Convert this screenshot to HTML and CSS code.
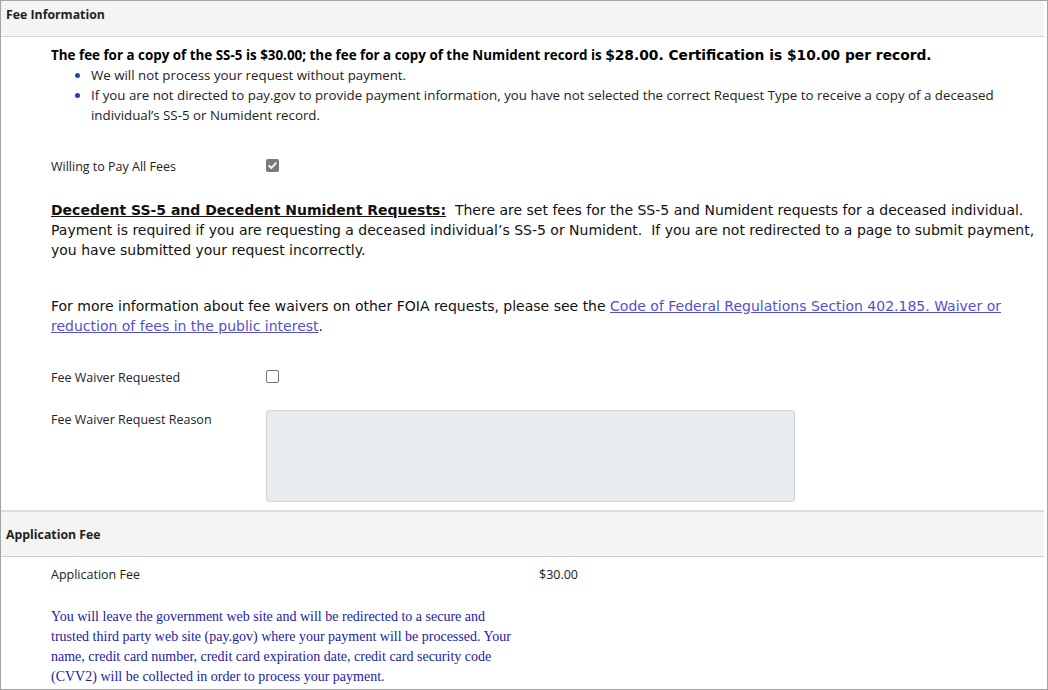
FILE: index.html
```html
<!DOCTYPE html>
<html lang="en">

<head>
  <meta charset="UTF-8">
  <meta name="viewport" content="width=device-width, initial-scale=1.0">
  <title>Fee Information</title>
  <link rel="stylesheet" href="styles.css">
</head>

<body>
  <div class="frame">
    <section class="panel">
      <div class="panel-head">Fee Information</div>
      <div class="panel-body fee-body">
        <p class="fee-lead">
          <span class="lead-ui">The fee for a copy of the SS-5 is $30.00; the fee for a copy of the Numident record is</span>
          <span class="lead-vd">$28.00. Certification is $10.00 per record.</span>
        </p>
        <ul class="fee-notes">
          <li>We will not process your request without payment.</li>
          <li>If you are not directed to pay.gov to provide payment information, you have not selected the correct Request Type to receive a copy of a deceased individual’s SS-5 or Numident record.</li>
        </ul>

        <div class="field-row row-pay">
          <span class="field-label">Willing to Pay All Fees</span>
          <span class="check is-checked">
            <svg width="13" height="13" viewBox="0 0 13 13">
              <rect x="0" y="0" width="13" height="13" rx="2" fill="#7a7a7a" />
              <path d="M3.2 6.8 L5.4 9 L9.9 4.2" fill="none" stroke="#fff" stroke-width="1.8" stroke-linecap="round" stroke-linejoin="round" />
            </svg>
          </span>
        </div>

        <p class="notice notice-decedent"><span class="notice-title">Decedent SS-5 and Decedent Numident Requests:</span>&nbsp; There are set fees for the SS-5 and Numident requests for a deceased individual. Payment is required if you are requesting a deceased individual’s SS-5 or Numident.&nbsp; If you are not redirected to a page to submit payment, you have submitted your request incorrectly.</p>

        <p class="notice notice-waiver">For more information about fee waivers on other FOIA requests, please see the <a href="#">Code of Federal Regulations Section 402.185. Waiver or reduction of fees in the public interest</a>.</p>

        <div class="field-row row-waiver">
          <span class="field-label">Fee Waiver Requested</span>
          <span class="check"></span>
        </div>

        <div class="field-row row-reason">
          <span class="field-label">Fee Waiver Request Reason</span>
          <textarea class="reason-box" disabled></textarea>
        </div>
      </div>
    </section>

    <section class="panel panel-app">
      <div class="panel-head">Application Fee</div>
      <div class="panel-body">
        <div class="amount-row">
          <span class="amount-label">Application Fee</span>
          <span class="amount-value">$30.00</span>
        </div>
        <p class="redirect-note">You will leave the government web site and will be redirected to a secure and trusted third party web site (pay.gov) where your payment will be processed. Your name, credit card number, credit card expiration date, credit card security code (CVV2) will be collected in order to process your payment.</p>
      </div>
    </section>
  </div>
</body>

</html>
```

FILE: styles.css
```css
body {
  margin: 0;
  font-family: "Open Sans", Arial, sans-serif;
  font-size: 13.3px;
  color: #222;
  background-color: #ffffff;
}

.frame {
  box-sizing: border-box;
  height: 690px;
  border: 1px solid #a4a4a4;
  overflow: hidden;
}

.panel-head {
  box-sizing: border-box;
  height: 36px;
  padding: 5px 5px 0;
  line-height: 18px;
  font-weight: 700;
  font-size: 12.3px;
  color: #222;
  background-color: #f4f4f4;
  border-bottom: 1px solid #d2d2d2;
  margin-right: 3px;
}

.panel-body {
  padding: 0 0 0 50px;
}

.fee-body {
  padding-top: 8px;
  padding-bottom: 8px;
}

.fee-lead {
  margin: 0;
  line-height: 20px;
  font-weight: 700;
  color: #000;
}

.lead-ui {
  font-size: 13.4px;
}

.lead-vd {
  font-family: "DejaVu Sans", Verdana, sans-serif;
  font-size: 13.8px;
}

.fee-notes {
  margin: 0;
  padding-left: 40px;
  max-width: 920px;
  line-height: 20px;
  color: #222;
}

.fee-notes li::marker {
  color: #2342b0;
}

.field-row {
  display: flex;
  align-items: center;
  line-height: 20px;
  font-size: 12.5px;
}

.field-label {
  width: 215px;
  flex-shrink: 0;
}

.row-pay {
  margin-top: 32px;
}

.check {
  box-sizing: border-box;
  display: block;
  width: 13px;
  height: 13px;
  border: 1px solid #767676;
  border-radius: 2px;
  background: #fff;
  margin-top: -3px;
}

.check.is-checked {
  border: none;
}

.check svg {
  display: block;
}

.notice {
  margin: 0;
  font-family: "DejaVu Sans", Verdana, sans-serif;
  font-size: 14px;
  line-height: 20px;
  color: #111;
}

.notice-decedent {
  margin-top: 23px;
}

.notice-title {
  font-weight: 700;
  text-decoration: underline;
}

.notice-waiver {
  margin-top: 36px;
  padding-right: 30px;
}

.notice a {
  color: #5450cc;
}

.row-waiver {
  margin-top: 32px;
}

.row-reason {
  align-items: flex-start;
  margin-top: 23px;
}

.row-reason .field-label {
  margin-top: -1px;
}

.reason-box {
  box-sizing: border-box;
  width: 529px;
  height: 92px;
  margin: -1px 0 0;
  border: 1px solid #cfd4d9;
  border-radius: 3px;
  background-color: #e9ecef;
  resize: none;
}

.panel-app .panel-head {
  height: 47px;
  padding-top: 14px;
  border-top: 2px solid #dcdcdc;
  border-bottom-color: #cdcdcd;
}

.amount-row {
  display: flex;
  padding-top: 8px;
  line-height: 20px;
  font-size: 12.5px;
}

.amount-label {
  width: 488px;
}

.redirect-note {
  margin: 22px 0 0;
  width: 470px;
  font-family: "Liberation Serif", "Times New Roman", serif;
  font-size: 14px;
  line-height: 20px;
  color: #1a1aa6;
}
```
